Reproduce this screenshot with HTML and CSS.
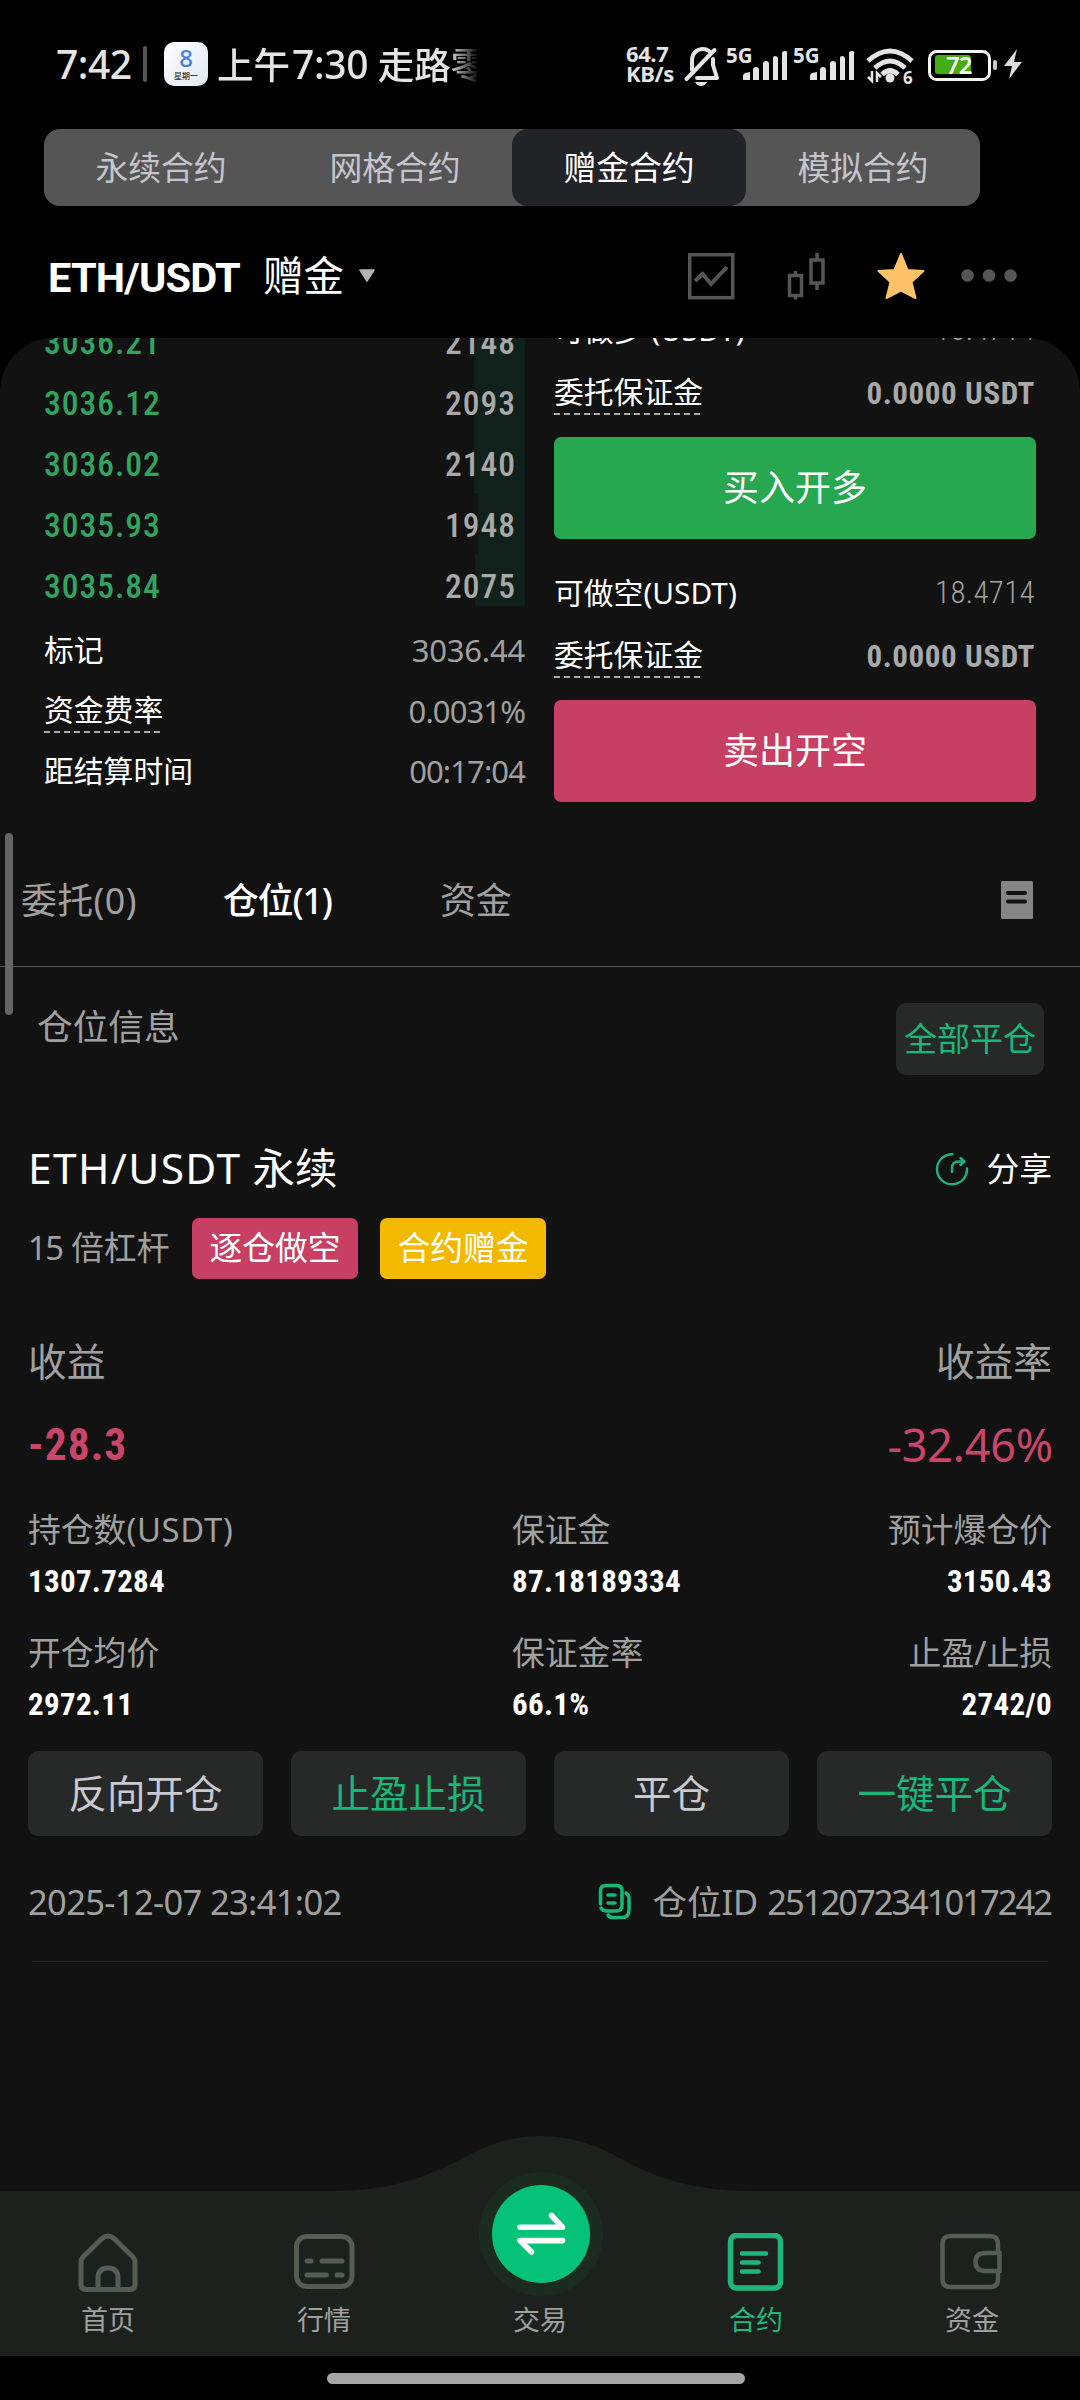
FILE: index.html
```html
<!DOCTYPE html>
<html lang="zh-CN">
<head>
<meta charset="utf-8">
<title>ETH/USDT 赠金合约</title>
<link rel="stylesheet" href="styles.css">
</head>
<body>
<div class="screen">
  <header class="status">
    <span class="status-time">7:42</span>
    <span class="status-sep"></span>
    <span class="calendar"><b>8</b><i>星期一</i></span>
    <span class="status-note">上午<span class="note-time">7:30</span> 走路零</span>
    <span class="net-speed"><span>64.7</span><span>KB/s</span></span>
    <svg class="status-icons" width="350" height="48" viewBox="682 40 350 48">
      <g fill="none" stroke="#e4e4e4" stroke-width="4" stroke-linecap="round" stroke-linejoin="round">
        <path d="M693 70V61C693 53 698 49 704 49C706 49 708 49.500 710 51"/>
        <path d="M714 59V65L718 78H698"/>
        <path d="M687.500 79L715.500 50"/>
      </g>
      <path d="M696 82H708Q706 86 702 86T696 82Z" fill="#e4e4e4"/>
      <g class="sig" fill="#e4e4e4">
        <text x="727" y="63">5G</text>
        <path id="bars" d="M744 80V76Q744 74 746 73L751 72V80ZM754 80V70Q754 67 757 67T760 70V80ZM764 80V64Q764 61 767 61T770 64V80ZM774 80V58Q774 56 776 56T779 58V80ZM783 80V53Q783 51 786 51T788 53V80Z"/>
        <text x="794" y="63">5G</text>
        <use href="#bars" x="67"/>
      </g>
      <g fill="none" stroke="#e4e4e4" stroke-width="5">
        <path d="M869 61Q891 41 913 61"/>
        <path d="M876 68Q891 54 906 68"/>
        <path d="M883 74.500Q891 67 899 74.500"/>
      </g>
      <circle cx="891" cy="78" r="4.500" fill="#e4e4e4"/>
      <path d="M873 71V81L869 77M878 82V73L882 77" fill="none" stroke="#e4e4e4" stroke-width="2.500"/>
      <text class="six" x="904" y="84">6</text>
      <rect x="930.500" y="51.500" width="60" height="28" rx="7" fill="none" stroke="#f4f4f4" stroke-width="3"/>
      <rect x="936" y="55" width="36" height="19" rx="3" fill="#45ad14"/>
      <rect x="994" y="60" width="4" height="10" rx="2" fill="#c8c8c8"/>
      <text class="pct" x="947" y="74">72</text>
      <path d="M1018 49L1005 66H1013L1010 79L1023 62H1015Z" fill="#dcdcdc"/>
    </svg>
  </header>

  <nav class="modes">
    <span>永续合约</span><span>网格合约</span><span class="on">赠金合约</span><span>模拟合约</span>
  </nav>

  <div class="pair-bar">
    <span class="pair">ETH/USDT</span>
    <span class="pair-kind">赠金</span>
    <svg class="caret" width="18" height="14" viewBox="0 0 18 14"><path d="M2 1H16L9 12Z" fill="#b4b4b4" stroke="#b4b4b4" stroke-width="1.500" stroke-linejoin="round"/></svg>
    <svg class="tools" width="336" height="50" viewBox="686 251 336 50">
      <g fill="none" stroke="#555" stroke-width="3.500">
        <rect x="689.700" y="254.700" width="43" height="43"/>
        <path d="M695 281L702.500 274L711 284L727 267" stroke-width="4"/>
        <rect x="789.500" y="275.500" width="12" height="20"/>
        <path d="M795.500 271V275M795.500 296V299.500M817 253V260M817 284V290"/>
        <rect x="811" y="260" width="12" height="23"/>
      </g>
      <path d="M901 254L907.500 270L923.500 271L911.500 282L915.500 298L901 290.500L886.500 298L890.500 282L878.500 271L894.500 270Z" fill="#ffc267" stroke="#ffc267" stroke-width="2" stroke-linejoin="round"/>
      <g fill="#555"><circle cx="967.500" cy="275.500" r="6.300"/><circle cx="989" cy="275.500" r="6.300"/><circle cx="1010.500" cy="275.500" r="6.300"/></g>
    </svg>
  </div>

  <main class="panel">
    <div class="trade">
      <section class="book">
        <div class="lvl"><span>3036.21</span><span class="qty" style="--d:51px">2148</span></div>
        <div class="lvl"><span>3036.12</span><span class="qty" style="--d:51px">2093</span></div>
        <div class="lvl"><span>3036.02</span><span class="qty" style="--d:51px">2140</span></div>
        <div class="lvl"><span>3035.93</span><span class="qty" style="--d:47px">1948</span></div>
        <div class="lvl last"><span>3035.84</span><span class="qty" style="--d:50px">2075</span></div>
        <div class="info"><span>标记</span><span class="val">3036.44</span></div>
        <div class="info"><span class="dash">资金费率</span><span class="val tight">0.0031%</span></div>
        <div class="info"><span>距结算时间</span><span class="val tight">00:17:04</span></div>
      </section>
      <section class="order">
        <div class="avail"><span>可做多 (USDT)</span><span class="thin">18.4714</span></div>
        <div class="margin"><span class="dash">委托保证金</span><span class="amount din">0.0000 USDT</span></div>
        <button class="act buy">买入开多</button>
        <div class="avail"><span>可做空(USDT)</span><span class="thin">18.4714</span></div>
        <div class="margin"><span class="dash">委托保证金</span><span class="amount din">0.0000 USDT</span></div>
        <button class="act sell">卖出开空</button>
      </section>
    </div>

    <nav class="tabs">
      <span>委托(0)</span><span class="on">仓位(1)</span><span>资金</span>
      <svg width="32" height="38" viewBox="0 0 32 38"><rect width="32" height="38" rx="1.500" fill="#858585"/><path d="M7 12H24M7 20.500H24" stroke="#121212" stroke-width="4" stroke-linecap="round"/></svg>
    </nav>

    <div class="pos-head"><span>仓位信息</span><button class="close-all">全部平仓</button></div>

    <article class="pos">
      <div class="title-row"><h2><span class="latin">ETH/USDT</span> 永续</h2>
        <span class="share"><svg width="34" height="34" viewBox="0 0 34 34" fill="none" stroke="#20b27c" stroke-width="2.400" stroke-linecap="round" stroke-linejoin="round"><path d="M17.500 2.300A15 15 0 1 0 32 16.500"/><path d="M17 20V16Q17 9.500 24 9.500H29M25.500 6L29.500 9.500L25.500 13"/></svg>分享</span></div>
      <div class="tag-row"><span class="lever"><span class="times">15</span> 倍杠杆</span><span class="tag short">逐仓做空</span><span class="tag gift">合约赠金</span></div>
      <div class="pnl-label"><span>收益</span><span>收益率</span></div>
      <div class="pnl"><span class="din profit">-28.3</span><span class="rate">-32.46%</span></div>
      <div class="stats">
        <div><span>持仓数<span class="unit">(USDT)</span></span><b class="din">1307.7284</b></div>
        <div><span>保证金</span><b class="din">87.18189334</b></div>
        <div><span>预计爆仓价</span><b class="din">3150.43</b></div>
        <div><span>开仓均价</span><b class="din">2972.11</b></div>
        <div><span>保证金率</span><b class="din">66.1%</b></div>
        <div><span>止盈/止损</span><b class="din">2742/0</b></div>
      </div>
      <div class="actions"><button>反向开仓</button><button class="green">止盈止损</button><button>平仓</button><button class="green">一键平仓</button></div>
      <div class="meta"><span class="date">2025-12-07 23:41:02</span>
        <span class="pid"><svg width="34" height="37" viewBox="0 0 34 37" fill="none" stroke="#12bb75" stroke-width="3.500" stroke-linecap="round" stroke-linejoin="round"><path d="M2.500 21V8Q2.500 2.500 8 2.500H18.500Q24 2.500 24 8V22Q24 28 18 28H10Q4 28 3 25"/><path d="M28 10Q31 12 31 15V27Q31 34.500 24 34.500H15Q11 34.500 10 32"/><path d="M10 12H17M10 20H17"/></svg><span>仓位ID <span class="id-no">2512072341017242</span></span></span></div>
      <div class="rule"></div>
    </article>
    <i class="scrollbar"></i>
  </main>

  <footer class="dock">
    <svg class="dock-bg" width="1080" height="220" viewBox="0 2136 1080 220">
      <path d="M0 2191H330C400 2191 438 2172 470 2154Q505 2136 541 2136T612 2154C644 2172 682 2191 752 2191H1080V2356H0Z" fill="#1c211d"/>
      <circle cx="541" cy="2234" r="62" fill="#1c2b20"/>
      <circle cx="541" cy="2234" r="49" fill="#04c277"/>
      <path d="M520 2227.300H562.500L551.500 2215.500M562.500 2240.600H520L531.500 2252" fill="none" stroke="#fff" stroke-width="5.600" stroke-linecap="round" stroke-linejoin="round"/>
    </svg>
    <nav class="dock-items">
      <span><svg width="64" height="60" viewBox="0 0 64 60" fill="none" stroke="#535d54" stroke-width="5"><path d="M5 29Q5 26 8 23L26 5.500Q32 .5 38 5.500L56 23Q59 26 59 29V51Q59 56.500 53.500 56.500H10.500Q5 56.500 5 51Z"/><path d="M22 56V45Q22 35 32 35T42 45V56"/></svg>首页</span>
      <span><svg width="64" height="60" viewBox="0 0 64 60" fill="none" stroke="#535d54" stroke-width="5"><rect x="4.500" y="3.500" width="55.500" height="50" rx="10"/><path d="M15 28H19M30 28H50M15 42H34.500M45 42H50" stroke-linecap="round"/></svg>行情</span>
      <span>交易</span>
      <span class="on"><svg width="64" height="60" viewBox="0 0 64 60" fill="none" stroke="#1fb67c" stroke-width="5.500"><rect x="6.500" y="2.500" width="50" height="52.500" rx="6"/><path d="M18 20.500H42M18 29.500H34.500M18 38.500H34.500" stroke-width="4.500" stroke-linecap="round"/></svg>合约</span>
      <span><svg width="64" height="60" viewBox="1.5 0 64 60" fill="none" stroke="#535d54" stroke-width="4.500"><path d="M59.500 20V11Q59.500 3 51.500 3H12Q4 3 4 11V46Q4 54 12 54H51.500Q59.500 54 59.500 46V38"/><path d="M61 20H47Q37 20 37 29T47 38H61Z"/></svg>资金</span>
    </nav>
  </footer>
  <div class="home-bar"><i></i></div>
</div>
</body>
</html>
```
FILE: styles.css
```css
* { box-sizing: border-box; }
body {
  margin: 0;
  background: #000;
  color: #fff;
  font-family: "Noto Sans", "Noto Sans CJK SC", sans-serif;
}
button { border: 0; padding: 0; font-family: inherit; color: inherit; }
i, b { font-style: normal; }
svg { display: block; flex: none; }
span { white-space: nowrap; }
.screen { width: 1080px; height: 2400px; overflow: hidden; display: flex; flex-direction: column; }
.din { font-family: Roboto, "Noto Sans CJK SC", sans-serif; font-stretch: 87%; font-weight: 700; }

/* status bar */
.status { height: 129px; display: flex; align-items: flex-start; padding: 40px 48px 0 56px; color: #e4e4e4; font-weight: 500; }
.status-time { font-size: 39px; line-height: 48px; width: 87px; letter-spacing: -.5px; }
.status-sep { width: 4px; height: 36px; margin: 6px 17px 0 0; background: #555; border-radius: 2px; }
.calendar { width: 44px; height: 44px; margin: 2px 9px 0 0; border-radius: 10px; background: linear-gradient(135deg, #fff, #dfe8f1); display: flex; flex-direction: column; align-items: center; }
.calendar b { color: #4480dc; font-size: 24px; line-height: 32px; height: 28px; font-weight: 500; }
.calendar i { color: #333; font-size: 8px; line-height: 12px; }
.status-note { width: 260px; height: 48px; overflow: hidden; font-size: 36.5px; line-height: 48px; -webkit-mask-image: linear-gradient(90deg, #000 232px, transparent 262px); mask-image: linear-gradient(90deg, #000 232px, transparent 262px); }
.note-time { font-size: 39px; letter-spacing: -.3px; margin-left: 2px; }
.net-speed { width: 55px; margin: 3px 0 0 149px; display: flex; flex-direction: column; font-size: 22px; line-height: 20px; font-weight: 700; letter-spacing: -.4px; }
.sig text { font: 700 20.500px "Noto Sans", sans-serif; }
.six { font: 700 17px "Noto Sans", sans-serif; fill: #e4e4e4; }
.pct { font: 600 24px "Noto Sans", sans-serif; fill: #f4f4f4; letter-spacing: -1px; }

.modes { display: flex; width: 936px; height: 77px; margin-left: 44px; background: #555; border-radius: 16px; font-size: 32.8px; line-height: 77px; color: #c6c5ce; }
.modes span { flex: 1; text-align: center; }
.modes .on { background: #222327; color: #fff; border-radius: 16px; }

.pair-bar { height: 132px; display: flex; align-items: center; padding: 7px 58px 0 48px; }
.pair { font: 700 41.5px Roboto, sans-serif; letter-spacing: -.8px; width: 215px; padding-top: 4px; }
.pair-kind { font-size: 40.5px; line-height: 60px; }
.caret { margin-left: 14px; }
.tools { margin-left: auto; }

/* scrolling panel */
.panel { position: relative; flex: none; height: 1798px; background: #121212; border-radius: 54px 54px 0 0; overflow: hidden; }
.trade { display: flex; justify-content: space-between; height: 504px; padding: 0 44px; }
.book { width: 481px; margin-top: -28px; }
.lvl { display: flex; justify-content: space-between; height: 61px; font: 500 33.5px/65px Roboto, sans-serif; font-stretch: 87%; letter-spacing: 1px; color: #31a55f; }
.lvl.last { height: 52px; margin-bottom: 14px; }
.qty { color: #a9a9a9; padding-right: 9px; background: linear-gradient(#10201b, #10201b) right / var(--d) 100% no-repeat; }
.info { display: flex; justify-content: space-between; height: 60.500px; line-height: 60px; font-size: 29.8px; }
.val { color: #a0a0a0; font-size: 31px; letter-spacing: -.2px; }
.tight { letter-spacing: -.9px; }
.dash { line-height: 41px; height: 44px; align-self: center; margin-top: 1px; background: repeating-linear-gradient(90deg, #aaa 0 6px, transparent 6px 10px) bottom / 100% 2px no-repeat; }
.order { width: 482px; margin-top: -40px; font-size: 29.8px; }
.avail, .margin { display: flex; justify-content: space-between; }
.avail { height: 63px; line-height: 63px; }
.margin { height: 62px; line-height: 65px; }
.thin { font: 350 31px/64px Roboto, sans-serif; font-stretch: 87%; letter-spacing: .3px; color: #a0a0a0; padding-right: 1px; }
.amount { font-size: 31px; letter-spacing: .6px; color: #a9a9a9; padding-right: 1px; }
.act { display: block; width: 482px; height: 102px; margin: 14px 0 22px; border-radius: 7px; font-size: 36px; line-height: 100px; }
.buy { background: #27a750; }
.sell { background: #c83f64; }

.tabs { display: flex; align-items: center; height: 125px; padding: 0 47px 8px 21px; border-bottom: 1px solid #575757; font-size: 35.800px; color: #a0a0a0; }
.tabs span { margin-top: -5px; }
.tabs span:nth-child(1) { width: 202px; letter-spacing: .5px; }
.tabs span:nth-child(2) { width: 217px; letter-spacing: -1.100px; }
.tabs .on { color: #fff; font-weight: 500; }
.tabs svg { margin-left: auto; }
.pos-head { display: flex; justify-content: space-between; height: 148px; padding: 36px 36px 0 37px; color: #a0a0a0; font-size: 35.700px; line-height: 47px; }
.close-all { width: 148px; height: 72px; border-radius: 10px; background: #272828; color: #18b77a; font-size: 33px; line-height: 70px; }

.pos { padding: 0 28px; }
.title-row { display: flex; justify-content: space-between; height: 103px; line-height: 106px; }
h2 { margin: 0; font-size: 42.500px; font-weight: 400; }
.latin { letter-spacing: 1.400px; }
.share { display: flex; align-items: center; gap: 17px; height: 107px; font-size: 32.800px; }
.tag-row { display: flex; height: 61px; line-height: 60px; font-size: 32.800px; }
.lever { width: 164px; color: #a0a0a0; }
.times { letter-spacing: -1.500px; }
.tag { width: 166px; margin-right: 22px; border-radius: 7px; text-align: center; }
.short { background: #c83f64; }
.gift { background: #f2b900; }
.pnl-label { display: flex; justify-content: space-between; height: 82px; margin-top: 42px; line-height: 81px; font-size: 38.700px; color: #a0a0a0; }
.pnl { display: flex; justify-content: space-between; height: 84px; line-height: 84px; font-size: 43.5px; color: #c9456a; }
.profit { line-height: 86px; letter-spacing: 1px; }
.rate { font-size: 45px; letter-spacing: -.2px; margin-right: -1px; }
.stats { display: grid; grid-template-columns: 484px 1fr auto; grid-auto-rows: 123px; padding-top: 18px; }
.stats div { display: flex; flex-direction: column; }
.stats div:nth-child(3n) { text-align: right; }
.stats span { font-size: 32.800px; line-height: 50px; color: #a0a0a0; }
.stats .unit { letter-spacing: .7px; }
.stats b { font-size: 31px; line-height: 54px; letter-spacing: .3px; }
.actions { display: flex; justify-content: space-between; }
.actions button { width: 235px; height: 85px; border-radius: 10px; background: #272828; color: #c9c9d0; font-size: 38.500px; line-height: 81px; }
.actions .green { color: #18b77a; }
.meta { display: flex; justify-content: space-between; height: 125px; line-height: 132px; color: #a0a0a0; font-size: 34.500px; }
.date { letter-spacing: -.65px; }
.pid { display: flex; align-items: center; gap: 20px; height: 131px; }
.id-no { letter-spacing: -2px; margin-right: 1px; }
.rule { height: 1px; margin: 0 4px; background: #292929; }
.scrollbar { position: absolute; left: 5px; top: 495px; width: 8px; height: 182px; border-radius: 4px; background: #666; }

/* bottom navigation, its hump rises over the panel */
.dock { position: relative; flex: none; height: 220px; background: #121212; }
.dock-bg { position: absolute; inset: 0; }
.dock-items { position: relative; display: flex; height: 220px; align-items: flex-end; padding-bottom: 15px; }
.dock-items span { flex: 1; display: flex; flex-direction: column; align-items: center; gap: 6px; font-size: 27px; line-height: 42px; color: #a0a0a0; }
.dock-items .on { color: #20b67c; }
.home-bar { height: 44px; padding: 17px 0 0 327px; }
.home-bar i { display: block; width: 418px; height: 11px; border-radius: 6px; background: #a6a6a6; }
```
